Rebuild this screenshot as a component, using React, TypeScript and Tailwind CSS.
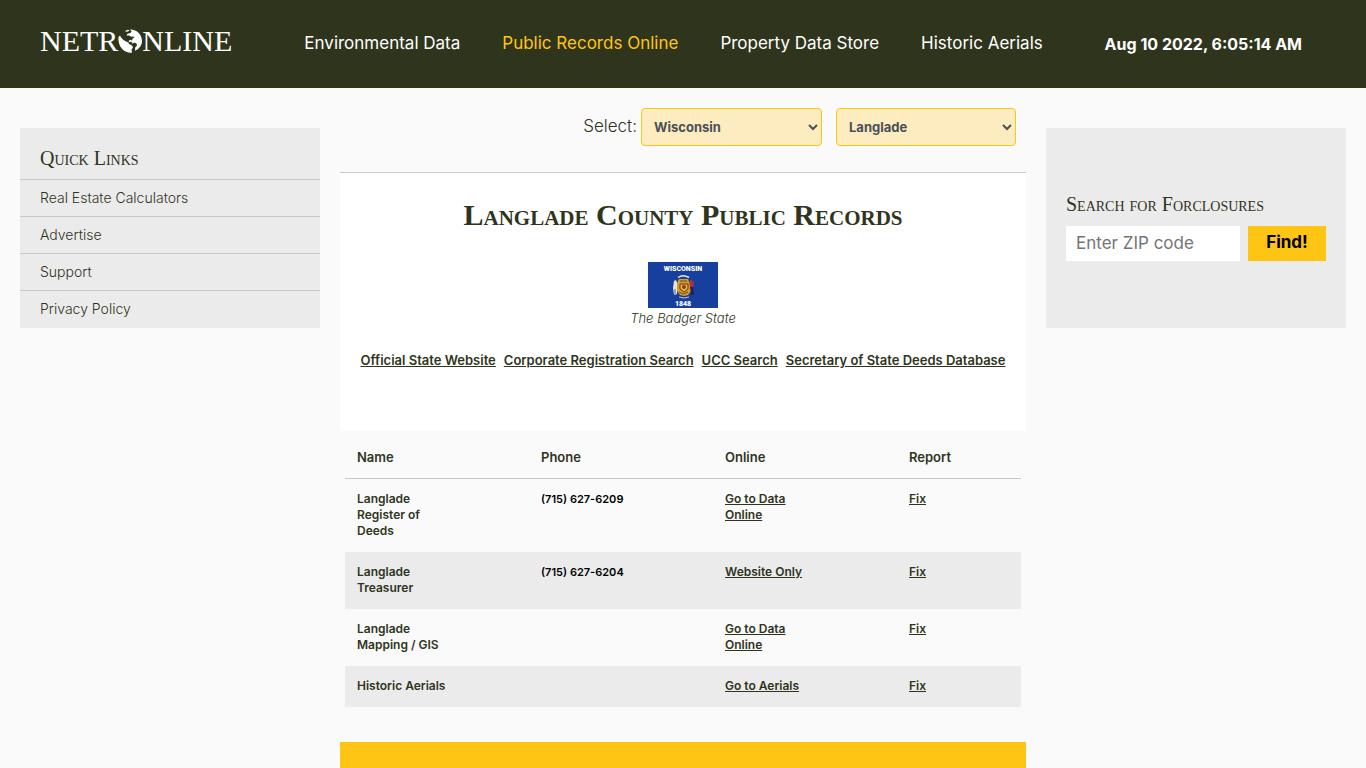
import { useState } from 'react'
import type { ReactNode } from 'react'

type RecordRow = {
  name: string
  phone?: string
  online: string
}

const NAV_ITEMS = [
  { label: 'Environmental Data', active: false },
  { label: 'Public Records Online', active: true },
  { label: 'Property Data Store', active: false },
  { label: 'Historic Aerials', active: false },
]

const QUICK_LINKS = ['Real Estate Calculators', 'Advertise', 'Support', 'Privacy Policy']

const STATE_LINKS = [
  'Official State Website',
  'Corporate Registration Search',
  'UCC Search',
  'Secretary of State Deeds Database',
]

const RECORDS: RecordRow[] = [
  { name: 'Langlade Register of Deeds', phone: '(715) 627-6209', online: 'Go to Data Online' },
  { name: 'Langlade Treasurer', phone: '(715) 627-6204', online: 'Website Only' },
  { name: 'Langlade Mapping / GIS', online: 'Go to Data Online' },
  { name: 'Historic Aerials', online: 'Go to Aerials' },
]

function Globe() {
  return (
    <svg viewBox="0 0 24 24" className="h-6 w-6" aria-hidden="true">
      <path
        fill="#fff"
        d="M0.5 8 L2 6.5 L3 8.5 L5.5 11 L8 12.5 L10.5 13.5 L11 15 L14 16.5 L15 18.5 L13.5 20.5 L14 23.8 C7 24.6 -0.5 18.5 0.5 8 Z"
      />
      <path
        fill="#fff"
        d="M7 2 L10 0.8 L11.5 1.6 L10 2.6 L8 2.8 Z M12 0.5 C19 0.3 24 6 24 12 C24 16.5 21 20 17 21.8 L17.2 18.5 L19 16.5 L18.5 14.6 L16 13.6 L14.5 14.8 L13.4 12.8 L11 13 L10.8 11.4 L13 10.8 L14 11.8 L14.6 9.6 L16.6 8.2 L15 7.4 L13 7.8 L11.4 6.4 L8.6 6.6 L9.4 4.8 L12.4 4 L13.6 2.6 Z"
      />
    </svg>
  )
}

function Logo() {
  return (
    <a
      href="#"
      aria-label="NETRONLINE"
      className="flex items-center pb-1.5 font-['Liberation_Serif',serif] text-[30px] leading-8 text-white"
    >
      <span>NETR</span>
      <Globe />
      <span>NLINE</span>
    </a>
  )
}

function WisconsinFlag() {
  return (
    <svg viewBox="0 0 70 46" className="h-[46px] w-[70px]" role="img" aria-label="Flag of Wisconsin">
      <rect width="70" height="46" fill="#173f9e" />
      <text x="35" y="9" textAnchor="middle" fontSize="7" className="fill-white font-[Roboto,sans-serif] font-black">
        WISCONSIN
      </text>
      <path d="M30 15.5 Q35 12 41 15.5" stroke="#e8e4dc" strokeWidth="1.5" fill="none" />
      <path d="M31 17 L40 17 L41 20 L43 21 L43 29 L40 33 L36 34 L32 33 L29 29 L29 21 Z" fill="#d79b2b" />
      <path d="M32 19 H39 M31 30 L35 32 L40 30" stroke="#6d4a1c" strokeWidth="1" fill="none" />
      <path d="M32 22 H40 V27 L36 30 L32 27 Z" fill="#e8b64a" stroke="#5f3a1e" strokeWidth="1" />
      <circle cx="36" cy="25" r="2" fill="#8c3b22" />
      <path d="M26 19 L28 18 L29 21 L29 32 L26 33 L25 26 Z" fill="#e9e3d8" />
      <path d="M26 27 L28 27 L28 33 L26 33 Z" fill="#8fa6c9" />
      <path d="M41 19 L44 18 L46 21 L45 25 L42 25 Z" fill="#b5302b" />
      <path d="M42 25 L45 25 L46 33 L43 33 Z" fill="#1d2449" />
      <path d="M31 35 L36 36 L41 35" stroke="#c9c3a8" strokeWidth="1" fill="none" />
      <text x="35" y="44" textAnchor="middle" fontSize="7" className="fill-white font-[Roboto,sans-serif] font-black">
        1848
      </text>
    </svg>
  )
}

function TextLink({ children }: { children: ReactNode }) {
  return (
    <a href="#" className="underline hover:no-underline">
      {children}
    </a>
  )
}

function SideHeading({ className, children }: { className?: string; children: string }) {
  return (
    <h2 className={`font-['Liberation_Serif',serif] text-[20px] leading-5 [font-variant:small-caps] ${className ?? ''}`}>
      {children}
    </h2>
  )
}

export default function App() {
  const [state, setState] = useState('Wisconsin')
  const [county, setCounty] = useState('Langlade')
  const [zip, setZip] = useState('')

  return (
    <div className="min-h-screen bg-[#fafafa] font-['Inter',sans-serif] text-[#2f351c]">
      <header className="flex h-[88px] items-center bg-[#2f351c] pr-16 pl-10 text-[17px] text-white">
        <Logo />
        <nav className="ml-[72px] flex gap-[42px]">
          {NAV_ITEMS.map((item) => (
            <a key={item.label} href="#" className={item.active ? 'text-[#ffc515]' : 'text-white'}>
              {item.label}
            </a>
          ))}
        </nav>
        <time className="ml-auto text-base font-bold">Aug 10 2022, 6:05:14 AM</time>
      </header>

      <div className="flex items-start gap-5 px-5">
        <aside className="mt-10 w-[300px] shrink-0 bg-[#ebebeb] pb-px">
          <SideHeading className="px-5 pt-5 pb-[11px]">Quick Links</SideHeading>
          <ul>
            {QUICK_LINKS.map((label) => (
              <li key={label} className="border-t border-[#c8c8c8]">
                <a href="#" className="block px-5 text-sm leading-9 font-light">
                  {label}
                </a>
              </li>
            ))}
          </ul>
        </aside>

        <main className="min-w-0 flex-1 pt-5">
          <div className="flex items-center justify-end pr-[10px]">
            <label htmlFor="state" className="mr-1 text-[17px] font-light">
              Select:
            </label>
            <select
              id="state"
              value={state}
              onChange={(e) => setState(e.target.value)}
              className="mr-[14px] h-[38px] w-[181px] rounded border border-[#ffc515] bg-[#fcecc0] px-2 text-[13px] font-bold text-[#495057]"
            >
              <option>Wisconsin</option>
            </select>
            <select
              aria-label="County"
              value={county}
              onChange={(e) => setCounty(e.target.value)}
              className="h-[38px] w-[180px] rounded border border-[#ffc515] bg-[#fcecc0] px-2 text-[13px] font-bold text-[#495057]"
            >
              <option>Langlade</option>
            </select>
          </div>

          <section className="mt-[26px] flex flex-col items-center border-t border-[#c8c8c8] bg-white pt-[26px] pb-[61px]">
            <h1 className="font-['Liberation_Serif',serif] text-[30px] leading-8 font-bold [font-variant:small-caps]">
              Langlade County Public Records
            </h1>
            <div className="mt-[31px]">
              <WisconsinFlag />
            </div>
            <p className="text-[13px] leading-5 font-light italic">The Badger State</p>
            <div className="mt-[22px] flex gap-2 text-[13px] leading-5 font-semibold">
              {STATE_LINKS.map((label) => (
                <TextLink key={label}>{label}</TextLink>
              ))}
            </div>
          </section>

          <div className="px-[5px]">
            <table className="w-full table-fixed text-left text-[12px] leading-4 font-semibold">
              <thead>
                <tr className="border-b border-[#c8c8c8] text-[13px]">
                  <th className="w-[184px] px-3 pt-[18px] pb-[13px] font-semibold">Name</th>
                  <th className="w-[184px] px-3 pt-[18px] pb-[13px] font-semibold">Phone</th>
                  <th className="w-[184px] px-3 pt-[18px] pb-[13px] font-semibold">Online</th>
                  <th className="px-3 pt-[18px] pb-[13px] font-semibold">Report</th>
                </tr>
              </thead>
              <tbody>
                {RECORDS.map((row) => (
                  <tr key={row.name} className="align-top even:bg-[#ebebeb]">
                    <td className="pt-3 pr-[72px] pb-[13px] pl-3">{row.name}</td>
                    <td className="px-3 pt-3 pb-[13px] text-[11px] text-black">{row.phone}</td>
                    <td className="pt-3 pr-20 pb-[13px] pl-3">
                      <TextLink>{row.online}</TextLink>
                    </td>
                    <td className="px-3 pt-3 pb-[13px]">
                      <TextLink>Fix</TextLink>
                    </td>
                  </tr>
                ))}
              </tbody>
            </table>
          </div>

          <div className="mt-[35px] h-24 bg-[#ffc515]" />
        </main>

        <aside className="mt-10 flex h-[200px] w-[300px] shrink-0 flex-col justify-center bg-[#ebebeb] px-5 pb-0.5">
          <SideHeading className="mb-3">Search for Forclosures</SideHeading>
          <form className="flex gap-2" onSubmit={(e) => e.preventDefault()}>
            <input
              type="text"
              aria-label="ZIP code"
              placeholder="Enter ZIP code"
              value={zip}
              onChange={(e) => setZip(e.target.value)}
              className="h-[35px] min-w-0 flex-1 bg-white px-[10px] text-[17px] placeholder:text-[#757575]"
            />
            <button type="submit" className="h-[35px] w-[78px] bg-[#ffc515] text-[17px] font-bold text-black">
              Find!
            </button>
          </form>
        </aside>
      </div>
    </div>
  )
}
